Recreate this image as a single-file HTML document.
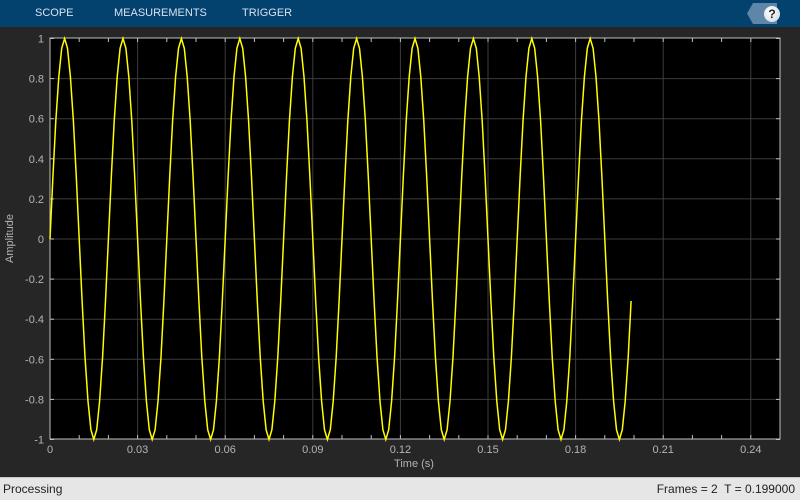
<!DOCTYPE html>
<html><head><meta charset="utf-8"><style>
*{margin:0;padding:0;box-sizing:border-box}
body{width:800px;height:500px;overflow:hidden;background:#262626;font-family:"Liberation Sans",sans-serif;position:relative}
#top{position:absolute;left:0;top:0;width:800px;height:27px;background:#03416f}
#top span{position:absolute;top:7px;color:#d6e2ee;font-size:11px}
#help{position:absolute;left:747px;top:3px;width:30px;height:21px;background:#5d86a8;clip-path:polygon(6px 0,100% 0,100% 100%,6px 100%,0 50%)}
#q{position:absolute;left:764px;top:6px;width:16px;height:16px;border-radius:50%;background:radial-gradient(circle at 40% 35%,#fff,#cfd6de);color:#223;font-weight:bold;font-size:12px;text-align:center;line-height:16px}
#status{position:absolute;left:0;top:477px;width:800px;height:23px;background:#e6e6e6;border-top:1px solid #c8c8c8;font-size:12px;color:#222}
svg{position:absolute;left:0;top:0}
</style></head><body>
<div id="top"><span style="left:35px">SCOPE</span><span style="left:114px">MEASUREMENTS</span><span style="left:242px">TRIGGER</span></div>
<div id="help"></div><div id="q">?</div>
<svg width="800" height="477" id="s" font-family="Liberation Sans, sans-serif" font-size="11" fill="#b4b4b4">
<rect x="50" y="38" width="730" height="401" fill="#000" stroke="#c0c0c0" stroke-width="1"/>
<g id="g"></g>
<text x="13" y="238.5" transform="rotate(-90 13 238.5)" text-anchor="middle">Amplitude</text>
<text x="414" y="467" text-anchor="middle">Time (s)</text>
</svg>
<div id="status"><span style="position:absolute;left:3px;top:4px">Processing</span><span style="position:absolute;right:5px;top:4px">Frames = 2&nbsp; T = 0.199000</span></div>
<script>
var g=document.getElementById('g'),h='';
function X(t){return 50+t*2920}function Y(v){return 38.5+(1-v)*200.5}
for(var i=0;i<=8;i++){var x=X(i*0.03);if(i>0)h+='<line x1="'+x+'" y1="38" x2="'+x+'" y2="439" stroke="#3c3c3c"/>';h+='<text x="'+x+'" y="453" text-anchor="middle">'+(i==0?'0':(i*0.03).toFixed(2))+'</text>';}
for(var i=0;i<=25;i++){var x=X(i*0.01);h+='<line x1="'+x+'" y1="38" x2="'+x+'" y2="42" stroke="#c0c0c0"/><line x1="'+x+'" y1="435" x2="'+x+'" y2="439" stroke="#c0c0c0"/>';}
for(var i=-5;i<=5;i++){var v=i/5,y=Y(v);if(i>-5&&i<5)h+='<line x1="50" y1="'+y+'" x2="780" y2="'+y+'" stroke="#3c3c3c"/>';h+='<line x1="50" y1="'+y+'" x2="54" y2="'+y+'" stroke="#c0c0c0"/><line x1="776" y1="'+y+'" x2="780" y2="'+y+'" stroke="#c0c0c0"/>';var s=(v==0?'0':(Math.abs(v)==1?String(v):v.toFixed(1)));h+='<text x="44" y="'+(y+4)+'" text-anchor="end">'+s+'</text>';}
var p=[];for(var k=0;k<=199;k++){var t=k*0.001;p.push(X(t).toFixed(1)+','+Y(Math.sin(2*Math.PI*50*t)).toFixed(1));}
h+='<polyline points="'+p.join(' ')+'" fill="none" stroke="#ffff00" stroke-width="1.5"/>';
g.innerHTML=h;
</script>
</body></html>
